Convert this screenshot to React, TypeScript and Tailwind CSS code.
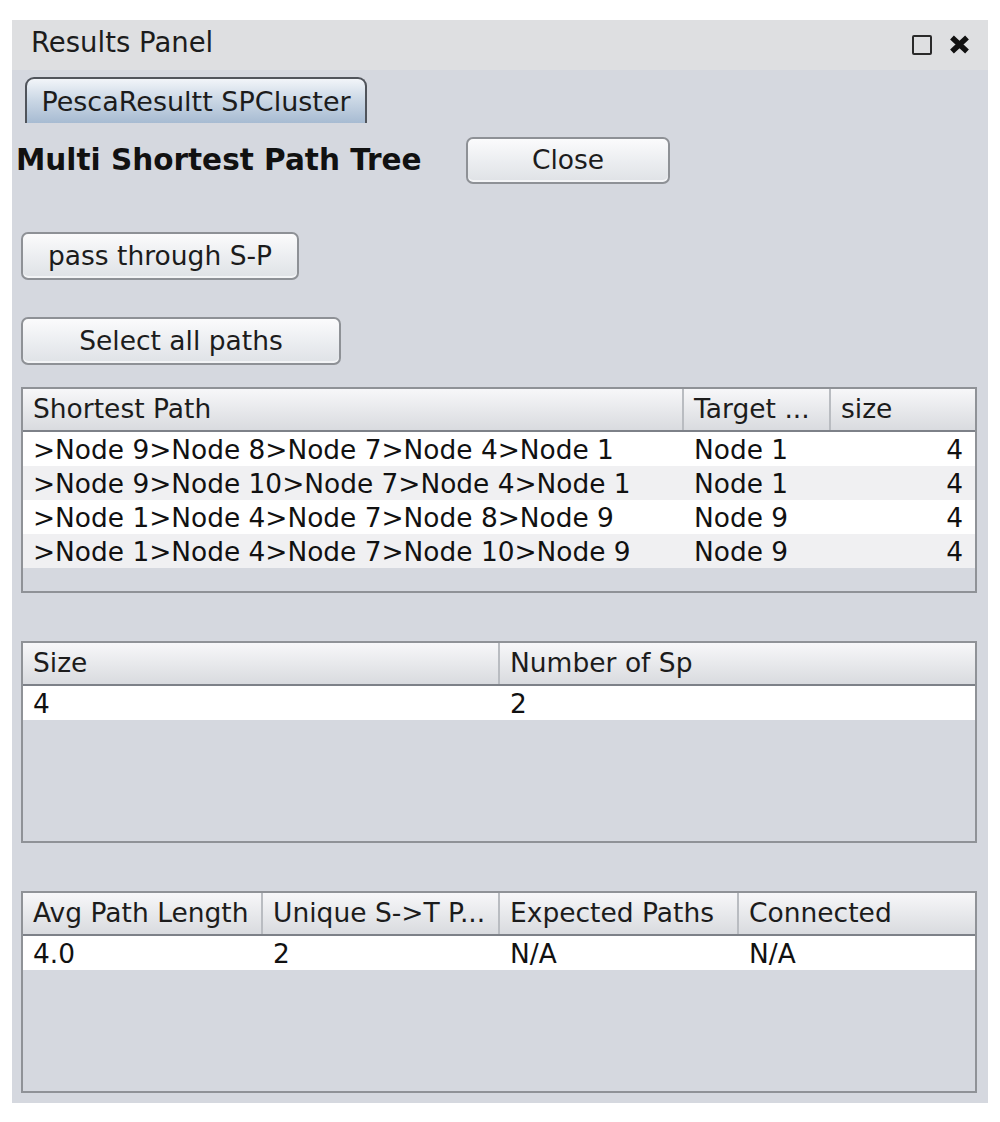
import React from 'react';

const font = { fontFamily: '"DejaVu Sans", Verdana, sans-serif' };

const btnClass =
  'flex items-center justify-center rounded-[7px] border-2 border-[#8e9196] bg-linear-to-b from-[#fbfbfc] via-[#eceef1] to-[#dfe2e6] text-[26.5px] text-[#1c1c1c] leading-none shadow-[inset_0_-2px_0_#f3f4f6]';

type Col = { title: string; width: string; align?: 'left' | 'right' };

const Table: React.FC<{ cols: Col[]; rows: string[][]; height: string }> = ({ cols, rows, height }) => (
  <div className={`flex w-[956px] flex-col border-2 border-[#8f9297] bg-[#d5d8df] ${height}`}>
    <div className="flex h-[43px] shrink-0 border-b-2 border-[#7d8188] bg-linear-to-b from-[#f7f7f9] via-[#e8e9ec] to-[#d9dbdf]">
      {cols.map((c, i) => (
        <div
          key={c.title}
          className={`flex items-center overflow-hidden whitespace-nowrap pl-[10px] text-[26.5px] leading-none text-[#1c1c1c] ${c.width} ${
            i < cols.length - 1 ? 'border-r-2 border-[#b9bcc1]' : ''
          }`}
        >
          {c.title}
        </div>
      ))}
    </div>
    {rows.map((r, ri) => (
      <div key={ri} className={`flex h-[34px] shrink-0 pt-[3px] ${ri % 2 === 0 ? 'bg-white' : 'bg-[#f0f0f2]'}`}>
        {r.map((cell, ci) => (
          <div
            key={ci}
            className={`flex items-center whitespace-nowrap text-[26.4px] leading-none text-[#111] ${cols[ci].width} ${
              cols[ci].align === 'right' ? 'justify-end pr-[12px]' : 'pl-[10px]'
            }`}
          >
            {cell}
          </div>
        ))}
      </div>
    ))}
  </div>
);

export default function App() {
  const pathRows = [
    ['>Node 9>Node 8>Node 7>Node 4>Node 1', 'Node 1', '4'],
    ['>Node 9>Node 10>Node 7>Node 4>Node 1', 'Node 1', '4'],
    ['>Node 1>Node 4>Node 7>Node 8>Node 9', 'Node 9', '4'],
    ['>Node 1>Node 4>Node 7>Node 10>Node 9', 'Node 9', '4'],
  ];

  return (
    <div className="h-[1122px] w-[1000px] bg-white px-[12px] pt-[20px]" style={font}>
      <div className="flex h-[1083px] w-[976px] flex-col">
        {/* title bar */}
        <div className="flex h-[50px] shrink-0 items-center justify-between bg-[#dedfe1] pb-[5px] pl-[19px] pr-[18px]">
          <span className="text-[27.5px] leading-none text-[#1c1c1c]">Results Panel</span>
          <div className="flex items-center gap-[17px] pt-[4px]">
            <div className="h-[20px] w-[20px] rounded-[2px] border-2 border-[#2a2a2a]" />
            <svg width="21" height="19" viewBox="0 0 21 19">
              <path d="M3 2.5 L18 16.5 M18 2.5 L3 16.5" stroke="#111" strokeWidth="5.5" strokeLinecap="butt" />
            </svg>
          </div>
        </div>

        {/* content */}
        <div className="flex flex-1 flex-col bg-[#d5d8df] pl-[9px]">
          <div className="ml-[4px] mt-[7px] flex h-[46px] w-[342px] items-center justify-center rounded-t-[9px] border-2 border-b-0 border-[#50545b] bg-linear-to-b from-[#f2f5f9] via-[#c9d6e4] to-[#a7bbd2] text-[27px] leading-none text-[#1c1c1c]">
            PescaResultt SPCluster
          </div>

          <div className="mt-[14px] flex h-[47px] items-center">
            <span className="-ml-[5px] w-[450px] text-[29.5px] font-bold leading-none text-[#111]">
              Multi Shortest Path Tree
            </span>
            <button className={`${btnClass} h-[47px] w-[204px]`}>Close</button>
          </div>

          <button className={`${btnClass} mt-[48px] h-[48px] w-[278px]`}>pass through S-P</button>
          <button className={`${btnClass} mt-[37px] h-[48px] w-[320px]`}>Select all paths</button>

          <div className="mt-[22px]">
            <Table
              height="h-[206px]"
              cols={[
                { title: 'Shortest Path', width: 'w-[661px]' },
                { title: 'Target ...', width: 'w-[147px]' },
                { title: 'size', width: 'w-[144px]', align: 'right' },
              ]}
              rows={pathRows}
            />
          </div>

          <div className="mt-[48px]">
            <Table
              height="h-[202px]"
              cols={[
                { title: 'Size', width: 'w-[477px]' },
                { title: 'Number of Sp', width: 'w-[475px]' },
              ]}
              rows={[['4', '2']]}
            />
          </div>

          <div className="mt-[48px]">
            <Table
              height="h-[202px]"
              cols={[
                { title: 'Avg Path Length', width: 'w-[240px]' },
                { title: 'Unique S->T P...', width: 'w-[237px]' },
                { title: 'Expected Paths', width: 'w-[239px]' },
                { title: 'Connected', width: 'w-[236px]' },
              ]}
              rows={[['4.0', '2', 'N/A', 'N/A']]}
            />
          </div>
        </div>
      </div>
    </div>
  );
}
